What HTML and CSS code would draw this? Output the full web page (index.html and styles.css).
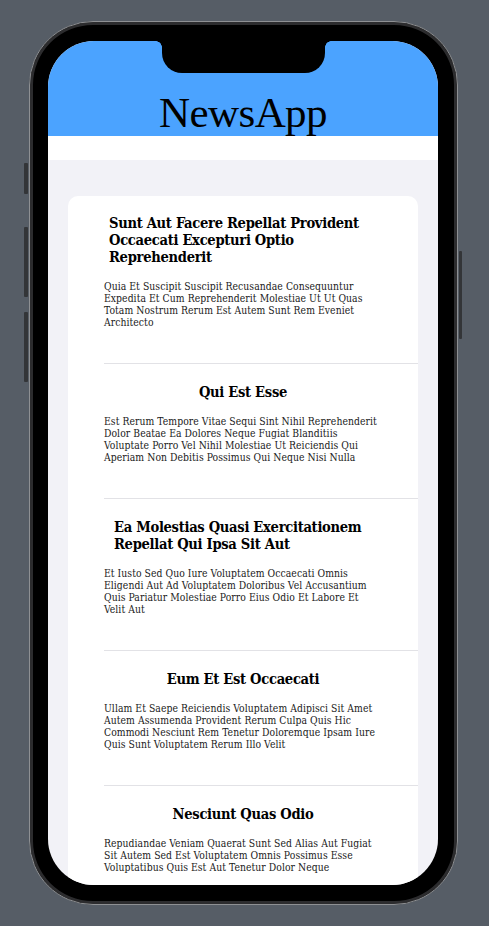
FILE: index.html
```html
<!DOCTYPE html>
<html lang="en">
<head>
<meta charset="utf-8">
<title>NewsApp</title>
<link rel="stylesheet" href="styles.css">
</head>
<body>
<div class="phone">
  <span class="btn btn--mute"></span>
  <span class="btn btn--volup"></span>
  <span class="btn btn--voldown"></span>
  <span class="btn btn--power"></span>
  <div class="screen">
    <div class="notch"></div>
    <header class="header"><h1 class="brand">NewsApp</h1></header>
    <div class="band"></div>
    <main class="content">
      <section class="card">
        <article class="row">
          <h2 class="title title--wrap">Sunt Aut Facere Repellat Provident<br>Occaecati Excepturi Optio<br>Reprehenderit</h2>
          <p class="body">Quia Et Suscipit Suscipit Recusandae Consequuntur<br>Expedita Et Cum Reprehenderit Molestiae Ut Ut Quas<br>Totam Nostrum Rerum Est Autem Sunt Rem Eveniet<br>Architecto</p>
        </article>
        <article class="row">
          <h2 class="title">Qui Est Esse</h2>
          <p class="body">Est Rerum Tempore Vitae Sequi Sint Nihil Reprehenderit<br>Dolor Beatae Ea Dolores Neque Fugiat Blanditiis<br>Voluptate Porro Vel Nihil Molestiae Ut Reiciendis Qui<br>Aperiam Non Debitis Possimus Qui Neque Nisi Nulla</p>
        </article>
        <article class="row">
          <h2 class="title title--wrap title--wrap-deep">Ea Molestias Quasi Exercitationem<br>Repellat Qui Ipsa Sit Aut</h2>
          <p class="body">Et Iusto Sed Quo Iure Voluptatem Occaecati Omnis<br>Eligendi Aut Ad Voluptatem Doloribus Vel Accusantium<br>Quis Pariatur Molestiae Porro Eius Odio Et Labore Et<br>Velit Aut</p>
        </article>
        <article class="row">
          <h2 class="title">Eum Et Est Occaecati</h2>
          <p class="body">Ullam Et Saepe Reiciendis Voluptatem Adipisci Sit Amet<br>Autem Assumenda Provident Rerum Culpa Quis Hic<br>Commodi Nesciunt Rem Tenetur Doloremque Ipsam Iure<br>Quis Sunt Voluptatem Rerum Illo Velit</p>
        </article>
        <article class="row">
          <h2 class="title">Nesciunt Quas Odio</h2>
          <p class="body">Repudiandae Veniam Quaerat Sunt Sed Alias Aut Fugiat<br>Sit Autem Sed Est Voluptatem Omnis Possimus Esse<br>Voluptatibus Quis Est Aut Tenetur Dolor Neque</p>
        </article>
      </section>
    </main>
  </div>
</div>
</body>
</html>
```
FILE: styles.css
```css
* { box-sizing: border-box; }

html, body {
  margin: 0;
  padding: 0;
}

body {
  background: #565d66;
  font-family: "Liberation Serif", "DejaVu Serif", serif;
  display: flex;
  justify-content: flex-start;
  align-items: flex-start;
  padding: 21px 0 0 29px;
  height: 926px;
  overflow: hidden;
}

.phone {
  position: relative;
  flex: none;
  width: 429px;
  height: 884px;
  padding: 19px 19px 19px 18px;
  border: 1px solid #8e9093;
  border-radius: 64px;
  background: #000;
  box-shadow: inset 0 0 0 3px #2c2c2e;
}

.btn {
  position: absolute;
  width: 4px;
  background: #333538;
  border-radius: 1px;
}
.btn--mute { left: -6px; top: 141px; height: 31px; }
.btn--volup { left: -6px; top: 205px; height: 70px; }
.btn--voldown { left: -6px; top: 290px; height: 70px; }
.btn--power { right: -5px; top: 229px; height: 88px; width: 3px; }

.screen {
  position: relative;
  width: 390px;
  height: 844px;
  border-radius: 46px;
  overflow: hidden;
  background: #f2f2f7;
}

.notch {
  position: absolute;
  top: 0;
  left: 114px;
  width: 163px;
  height: 32px;
  background: #000;
  border-radius: 0 0 20px 20px;
  z-index: 2;
}
.notch::before,
.notch::after {
  content: "";
  position: absolute;
  top: 0;
  width: 6px;
  height: 6px;
}
.notch::before {
  left: -6px;
  background: radial-gradient(circle at 0 100%, transparent 5.5px, #000 6px);
}
.notch::after {
  right: -6px;
  background: radial-gradient(circle at 100% 100%, transparent 5.5px, #000 6px);
}

.header {
  height: 95px;
  background: #4ba3ff;
  display: flex;
  align-items: flex-end;
  justify-content: center;
  padding-bottom: 2px;
}

.brand {
  margin: 0;
  font-family: "Liberation Serif", serif;
  font-weight: 400;
  font-size: 43px;
  line-height: 43px;
  letter-spacing: -0.6px;
  color: #000;
}

.band {
  height: 24px;
  background: #fff;
}

.content {
  padding: 36px 20px 0;
}

.card {
  background: #fff;
  border-radius: 10px;
  min-height: 700px;
}

.row {
  padding: 18px 36px 35px;
  display: flex;
  flex-direction: column;
  gap: 15px;
  position: relative;
}
.row + .row::before {
  content: "";
  position: absolute;
  top: 0;
  left: 36px;
  right: 0;
  height: 1px;
  background: #e2e2e6;
}
.row + .row {
  padding-top: 20px;
}

.title {
  margin: 0;
  font-family: "DejaVu Serif Condensed", "DejaVu Serif", serif;
  font-stretch: semi-condensed;
  font-size: 14.6px;
  line-height: 17px;
  letter-spacing: -0.3px;
  font-weight: 700;
  color: #000;
  text-align: center;
}
.title--wrap {
  text-align: left;
  padding-left: 5px;
}
.title--wrap-deep {
  padding-left: 10px;
}

.body {
  margin: 0;
  font-family: "DejaVu Serif Condensed", "DejaVu Serif", serif;
  font-stretch: semi-condensed;
  font-size: 10.3px;
  line-height: 12px;
  letter-spacing: 0.06px;
  color: #1a1a1a;
}
```
